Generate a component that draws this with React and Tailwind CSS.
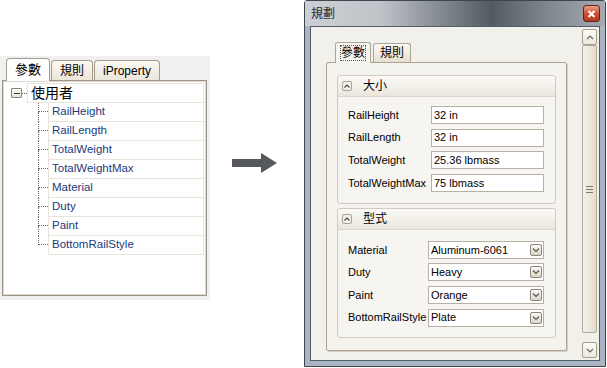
import { useState } from "react"

const treeRows = [
  "RailHeight",
  "RailLength",
  "TotalWeight",
  "TotalWeightMax",
  "Material",
  "Duty",
  "Paint",
  "BottomRailStyle",
]

const sizeRows = [
  { label: "RailHeight", value: "32 in" },
  { label: "RailLength", value: "32 in" },
  { label: "TotalWeight", value: "25.36 lbmass" },
  { label: "TotalWeightMax", value: "75 lbmass" },
]

const typeRows = [
  { label: "Material", value: "Aluminum-6061" },
  { label: "Duty", value: "Heavy" },
  { label: "Paint", value: "Orange" },
  { label: "BottomRailStyle", value: "Plate" },
]

/* ---------------------------
   LEFT: BROWSER TREE
--------------------------- */

function TreeRow({ name, last }) {
  return (
    <div className="flex h-[19px]">
      <div className="w-[10px] flex flex-col">
        <div className="h-[9px] border-l border-b border-dotted border-[#6b6b6b]" />
        <div className={`flex-1 ${last ? "" : "border-l border-dotted border-[#6b6b6b]"}`} />
      </div>
      <div className="flex-1 flex items-center pl-[3px] border-r border-b border-l border-[#e8e4d9] text-[11.5px] text-[#22397a]">
        {name}
      </div>
    </div>
  )
}

function LeftPanel() {
  const [tab, setTab] = useState(0)
  const tabs = ["參數", "規則", "iProperty"]

  return (
    <div className="mt-[56px] w-[210px] h-[244px] bg-[#f0f0f0] pl-[2px] pt-[2px] flex flex-col">

      {/* tabs */}
      <div className="flex items-end h-[22px] pl-[4px] gap-[1px]">
        {tabs.map((t, i) => (
          <button
            key={t}
            onClick={() => setTab(i)}
            className={
              i === tab
                ? "relative z-10 -mb-px h-[23px] px-[8px] border border-b-0 border-[#a39a8c] rounded-t-[4px] bg-white text-[13px] text-black"
                : "h-[20px] px-[8px] border border-b-0 border-[#a39a8c] rounded-t-[4px] bg-[linear-gradient(#faf8f3,#ebe6da)] text-[12px] text-black"
            }
          >
            {t}
          </button>
        ))}
      </div>

      {/* tree box */}
      <div className="w-[205px] h-[216px] border border-[#9d9488] bg-white shadow-[inset_0_0_0_1px_#ddd8cf] pt-[2px] pr-[2px]">

        <div className="flex items-center h-[20px]">
          <div className="ml-[8px] w-[11px] h-[10px] border border-[#8a8171] rounded-[1px] bg-[linear-gradient(#fff,#e9e4d8)] flex items-center justify-center">
            <div className="w-[6px] h-[1px] bg-[#3a3a3a]" />
          </div>
          <div className="w-[5px] border-t border-dotted border-[#6b6b6b]" />
          <div className="flex-1 h-full flex items-center pl-[3px] border border-[#e8e4d9] text-[14px] text-black">
            使用者
          </div>
        </div>

        <div className="ml-[35px]">
          {treeRows.map((r, i) => (
            <TreeRow key={r} name={r} last={i === treeRows.length - 1} />
          ))}
        </div>

      </div>
    </div>
  )
}

/* ---------------------------
   RIGHT: DIALOG
--------------------------- */

function DropButton() {
  return (
    <div className="w-[12px] h-[12px] border border-[#8c8477] rounded-[2px] bg-[linear-gradient(#fbfaf6,#dcd6c9)] flex items-center justify-center">
      <svg width="8" height="6" viewBox="0 0 8 6">
        <path d="M1 1.5 L4 4.5 L7 1.5" fill="none" stroke="#5b544a" strokeWidth="1.2" />
      </svg>
    </div>
  )
}

function ParamRow({ label, value, labelWidth, dropdown }) {
  return (
    <div className="flex items-center h-[18px]">
      <div className="text-[11px] text-black" style={{ width: labelWidth }}>
        {label}
      </div>
      <div className="flex-1 h-full bg-white border border-[#b8b1a3] flex items-center justify-between pl-[2px] pr-[1px] text-[11px] text-black">
        <span>{value}</span>
        {dropdown && <DropButton />}
      </div>
    </div>
  )
}

function Group({ title, rows, labelWidth, dropdown, pt, pb }) {
  return (
    <div className="border border-[#d2cbbd] rounded-[3px] bg-[#f7f5f1]">
      <div className="h-[21px] flex items-center border-b border-[#ded8cb] bg-[linear-gradient(#fbfaf7,#ebe6dc)] rounded-t-[3px]">
        <div className="ml-[4px] w-[10px] h-[10px] border border-[#aaa293] rounded-[2px] bg-[#f3f0e8] flex items-center justify-center">
          <svg width="6" height="4" viewBox="0 0 6 4">
            <path d="M0.5 3.5 L3 1 L5.5 3.5" fill="none" stroke="#4a4339" strokeWidth="1.1" />
          </svg>
        </div>
        <span className="ml-[11px] text-[12px] text-black">{title}</span>
      </div>
      <div className={`flex flex-col gap-[4.6px] pl-[10px] pr-[11px] ${pt} ${pb}`}>
        {rows.map((r) => (
          <ParamRow key={r.label} {...r} labelWidth={labelWidth} dropdown={dropdown} />
        ))}
      </div>
    </div>
  )
}

function ScrollBar() {
  return (
    <div className="mt-[2px] w-[15px] h-[329px] flex flex-col">
      <div className="h-[16px] border border-[#a59c8c] rounded-[2px] bg-[linear-gradient(#fcfbf8,#ebe7dd)] flex items-center justify-center">
        <svg width="8" height="5" viewBox="0 0 8 5">
          <path d="M1 4 L4 1 L7 4" fill="none" stroke="#6b6357" strokeWidth="1.1" />
        </svg>
      </div>
      <div className="h-[288px] border border-[#b3ab9a] rounded-[2px] bg-[linear-gradient(to_right,#f4f1e8,#e4decf)] flex items-center justify-center">
        <div className="flex flex-col gap-[2px]">
          <div className="w-[7px] h-[1px] bg-[#7d766b]" />
          <div className="w-[7px] h-[1px] bg-[#7d766b]" />
          <div className="w-[7px] h-[1px] bg-[#7d766b]" />
        </div>
      </div>
      <div className="flex-1" />
      <div className="h-[16px] border border-[#a59c8c] rounded-[2px] bg-[linear-gradient(#fcfbf8,#ebe7dd)] flex items-center justify-center">
        <svg width="8" height="5" viewBox="0 0 8 5">
          <path d="M1 1 L4 4 L7 1" fill="none" stroke="#6b6357" strokeWidth="1.1" />
        </svg>
      </div>
    </div>
  )
}

function Dialog() {
  const [tab, setTab] = useState(0)
  const tabs = ["參數", "規則"]

  return (
    <div className="w-[302px] h-[367px] border border-[#3d454f] rounded-t-[3px] bg-[#a9b5c2] flex flex-col">

      {/* title bar */}
      <div className="h-[25px] flex items-center justify-between pl-[6px] pr-[5px] bg-[linear-gradient(to_right,#ccd0d4_0%,#bfc4c9_25%,#7b8288_48%,#535a61_62%,#7e858c_80%,#a4aab0_100%)]">
        <span className="text-[12px] text-[#1e2630]">規劃</span>
        <div className="w-[17px] h-[17px] border border-[#5d2418] rounded-[3px] bg-[linear-gradient(#ee9a83,#cf4a30_55%,#b8381f)] flex items-center justify-center">
          <svg width="9" height="8" viewBox="0 0 9 8">
            <path d="M1.5 1 L7.5 7 M7.5 1 L1.5 7" stroke="white" strokeWidth="2" />
          </svg>
        </div>
      </div>

      {/* client */}
      <div className="flex-1 mx-[5px] mb-[5px] border border-[#525d69] bg-[#f2f0ea] flex pl-[15px] pr-[2px]">

        <div className="w-[241px] pt-[15px] flex flex-col">

          <div className="flex items-end h-[20px] pl-[9px] gap-[2px]">
            {tabs.map((t, i) => (
              <button
                key={t}
                onClick={() => setTab(i)}
                className={
                  i === tab
                    ? "relative z-10 -mb-px h-[21px] px-[5px] border border-b-0 border-[#aea596] rounded-t-[3px] bg-[#f6f4ef] text-[12px] text-black"
                    : "h-[19px] px-[6px] border border-b-0 border-[#aea596] rounded-t-[3px] bg-[linear-gradient(#faf8f3,#e6e0d3)] text-[12px] text-black"
                }
              >
                <span className={i === tab ? "outline outline-1 outline-dotted outline-[#555]" : ""}>{t}</span>
              </button>
            ))}
          </div>

          <div className="h-[289px] border border-[#aca393] rounded-[2px] bg-[#f5f3ee] shadow-[1px_1px_0_#d6d0c4] px-[10px] pt-[12px] flex flex-col gap-[4px]">
            <Group title="大小" rows={sizeRows} labelWidth={83} pt="pt-[9px]" pb="pb-[11px]" />
            <Group title="型式" rows={typeRows} labelWidth={80} dropdown pt="pt-[11px]" pb="pb-[10px]" />
          </div>

        </div>

        <div className="ml-[15px]">
          <ScrollBar />
        </div>

      </div>
    </div>
  )
}

export default function App() {
  return (
    <div className="w-[607px] h-[368px] bg-white flex items-start font-['Liberation_Sans','Noto_Sans_CJK_TC',sans-serif]">

      <LeftPanel />

      {/* arrow */}
      <div className="w-[94px] h-full flex items-start">
        <svg className="mt-[152px] ml-[22px]" width="46" height="22" viewBox="0 0 46 22">
          <path d="M0 7 H29 V1 L45 11 L29 21 V15 H0 Z" fill="#55595e" />
        </svg>
      </div>

      <Dialog />

    </div>
  )
}
